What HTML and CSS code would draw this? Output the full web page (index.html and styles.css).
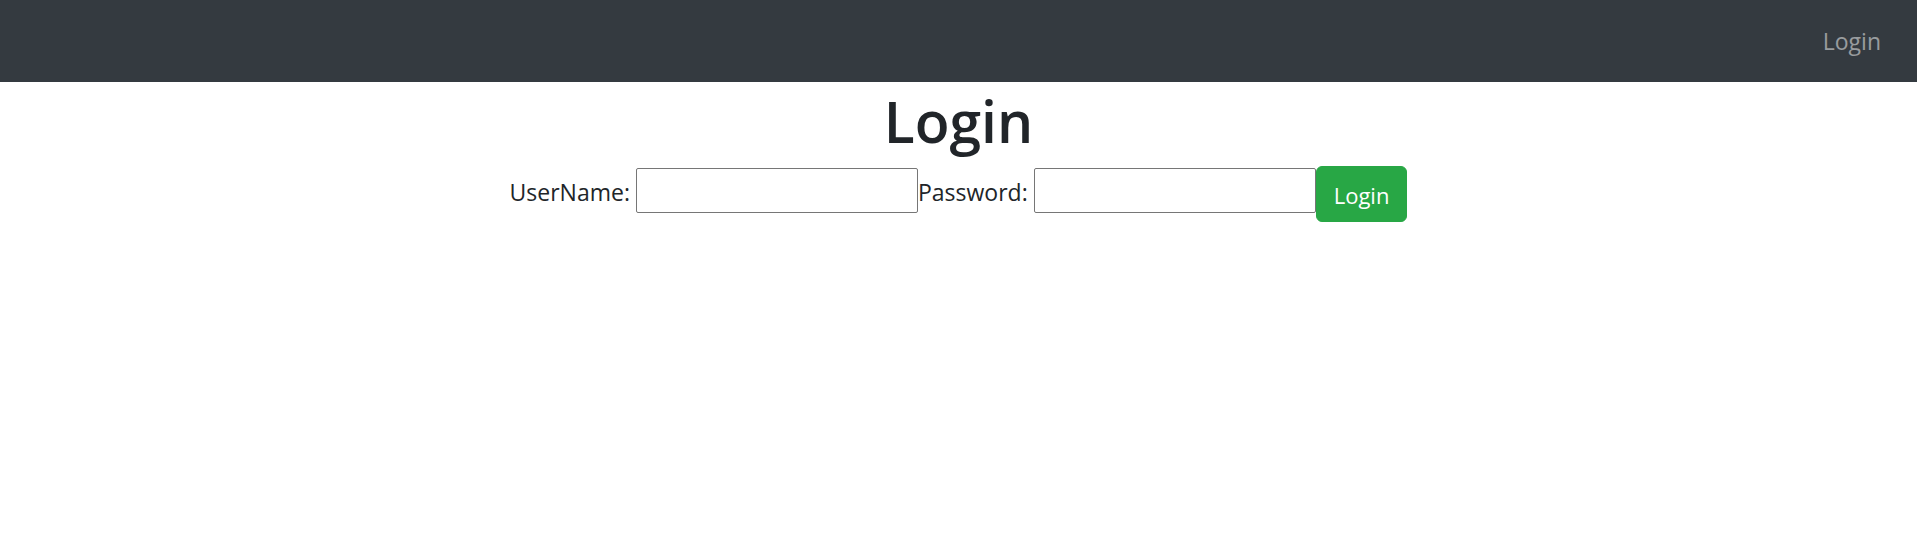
FILE: index.html
```html
<!DOCTYPE html>
<html lang="en">
<head>
<meta charset="utf-8">
<title>Login</title>
<link rel="stylesheet" href="styles.css">
</head>
<body>
<nav class="navbar">
  <a class="nav-link" href="#">Login</a>
</nav>
<main class="content">
  <h1 class="title">Login</h1>
  <form class="login-form">
    <label class="field-label" for="user">UserName:</label>
    <input class="field-input" id="user" type="text">
    <label class="field-label" for="pass">Password:</label>
    <input class="field-input" id="pass" type="password">
    <button class="btn-login" type="button">Login</button>
  </form>
</main>
</body>
</html>
```
FILE: styles.css
```css
* { box-sizing: border-box; }
html, body { margin: 0; padding: 0; }
body {
  font-family: "Open Sans", "Noto Sans", sans-serif;
  font-size: 24px;
  line-height: 36px;
  color: #212529;
  background: #fff;
}
.navbar {
  height: 82px;
  background: #343a40;
  display: flex;
  align-items: center;
  justify-content: flex-end;
  padding: 0 24px;
}
.nav-link {
  color: rgba(255,255,255,0.5);
  text-decoration: none;
  padding: 0 12px;
  font-size: 23px;
}
.content { text-align: center; }
.title {
  margin: 0 0 9px;
  padding-top: 3px;
  font-size: 57px;
  line-height: 72px;
  font-weight: 600;
}
.login-form {
  display: flex;
  justify-content: center;
  align-items: flex-start;
}
.field-label {
  margin-top: 8px;
  margin-right: 6px;
  font-size: 23px;
}
.field-input {
  margin-top: 2px;
  width: 282px;
  height: 45px;
  border: 1px solid #767676;
  border-radius: 2px;
  font-size: 20px;
  padding: 2px 4px;
}
.btn-login {
  height: 56px;
  padding: 10px 17px 8px;
  border: 1px solid #28a745;
  border-radius: 6px;
  background: #28a745;
  color: #fff;
  font-family: inherit;
  font-size: 22px;
  line-height: 36px;
}
```
